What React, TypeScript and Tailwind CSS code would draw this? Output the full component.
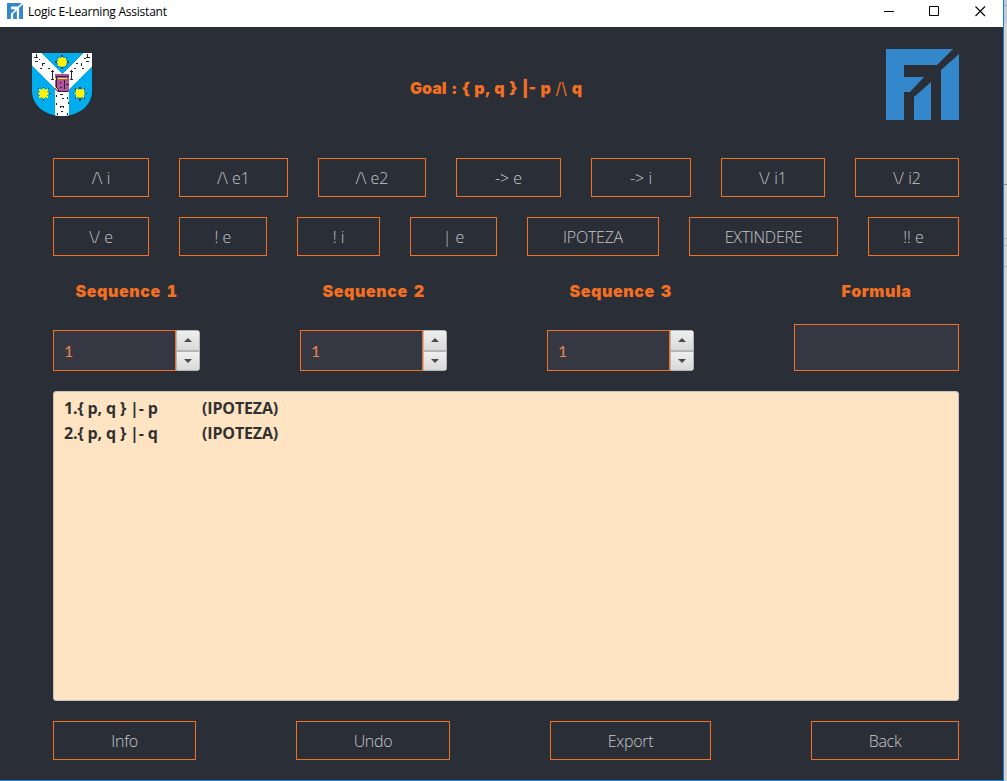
import React from "react";

const ui = "font-['Open_Sans','Noto_Sans',sans-serif]";

function Logo({ className }: { className: string }) {
  return (
    <svg viewBox="0 0 73 71" preserveAspectRatio="none" className={className} fill="#3387ca">
      <path d="M0 0H67L51 16H18V28H38L24 43H18V71H0Z" />
      <path d="M28 48L45 33V71H28Z" />
      <path d="M55 21L73 5V71H55Z" />
    </svg>
  );
}

function Star({ x, y }: { x: number; y: number }) {
  return (
    <g transform={`translate(${x} ${y})`}>
      <path d="M-7 0H7M0 -7V7M-5 -5L5 5M5 -5L-5 5" stroke="#3a3b22" strokeWidth="1.4" />
      <path
        d="M0 -5.5L1.6 -3.8L4.4 -4.4L3.8 -1.6L5.5 0L3.8 1.6L4.4 4.4L1.6 3.8L0 5.5L-1.6 3.8L-4.4 4.4L-3.8 1.6L-5.5 0L-3.8 -1.6L-4.4 -4.4L-1.6 -3.8Z"
        fill="#fff200"
      />
    </g>
  );
}

function Crest() {
  return (
    <svg viewBox="0 0 60 63" className="h-[63px] w-[60px]" shapeRendering="crispEdges">
      <clipPath id="shield">
        <path d="M0 0H60V38C60 53 46 63 30 63S0 53 0 38Z" />
      </clipPath>
      <g clipPath="url(#shield)">
        <path d="M0 0H60V63H0Z" fill="#00adef" />
        <path d="M0 0H9L30 21L51 0H60V13L37 36V63H23V36L0 13Z" fill="#fff" />
        <g fill="none" stroke="#25282e" strokeWidth="1">
          <path d="M4.5 1V4M2 4.5H6M3 8.5H6M10.5 10V13M16 15.5H18M8 15.5H10M20.5 17V26M19 18.5H22M19 26.5H22" />
          <path d="M55.5 1V4M54 4.5H58M54 8.5H57M49.5 10V13M42 15.5H44M50 15.5H52M39.5 17V26M38 18.5H41M38 26.5H41" />
          <path d="M11 10.5H13M46 10.5H44M52 5.5H54M7 6.5H8" />
          <path d="M28 41.5H31M30 45.5H32M24.5 42V44M35.5 44V46M28 53.5H32M28.5 53V55M31.5 53V55M29 58.5H31M24.5 50V52M36.5 49V51M25.5 60V62M35.5 60V62" />
        </g>
        <path d="M23 21H37V39H25L23 36Z" fill="#b5529d" />
        <path d="M24 23.5H37M24.5 24V34L27 38.5H36" fill="none" stroke="#25282e" strokeWidth="1.2" />
        <path d="M26 25.5H35M23.5 27V25M23 34L26 37" fill="none" stroke="#fff200" strokeWidth="1.2" />
        <path d="M32.5 27V36M28.5 29V31M28 34.5H30M34 31.5H37" fill="none" stroke="#25282e" />
      </g>
      <Star x={30} y={9} />
      <Star x={11.5} y={40.5} />
      <Star x={48} y={40.5} />
    </svg>
  );
}

type Item = { label: string; size: string };

const rowOne: Item[] = [
  { label: "/\\ i", size: "w-24" },
  { label: "/\\ e1", size: "w-[109px]" },
  { label: "/\\ e2", size: "w-[108px]" },
  { label: "-> e", size: "w-[105px]" },
  { label: "-> i", size: "w-[100px]" },
  { label: "\\/ i1", size: "w-[104px]" },
  { label: "\\/ i2", size: "w-[104px]" },
];

const rowTwo: Item[] = [
  { label: "\\/ e", size: "w-24" },
  { label: "! e", size: "w-[88px]" },
  { label: "! i", size: "w-[83px]" },
  { label: "| e", size: "w-[87px]" },
  { label: "IPOTEZA", size: "w-[132px] tracking-[-0.25px]" },
  { label: "EXTINDERE", size: "w-[149px] tracking-[-0.25px]" },
  { label: "!! e", size: "w-[91px]" },
];

const footer: Item[] = [
  { label: "Info", size: "w-[143px] tracking-[-0.3px]" },
  { label: "Undo", size: "w-[154px] tracking-[-0.3px]" },
  { label: "Export", size: "w-[161px] tracking-[-0.3px]" },
  { label: "Back", size: "w-[148px] tracking-[-0.3px]" },
];

function Buttons({ items }: { items: Item[] }) {
  return (
    <div className="flex h-[39px] justify-between">
      {items.map((b) => (
        <button
          key={b.label}
          className={`flex items-center justify-center border border-[#f36f21] text-base font-light whitespace-pre text-[#c6c7c9] ${b.size}`}
        >
          {b.label}
        </button>
      ))}
    </div>
  );
}

const heading =
  "font-['Inter','Liberation_Sans',sans-serif] text-base leading-5 font-black whitespace-pre text-[#f36f21]";

function Heading({ children }: { children: React.ReactNode }) {
  return <span className={`${heading} tracking-[0.6px] tabular-nums [word-spacing:1px]`}>{children}</span>;
}

function Arrow({ down }: { down?: boolean }) {
  return (
    <div className="flex flex-1 items-center justify-center bg-linear-to-b from-[#efefef] to-[#d9d9d9]">
      <svg viewBox="0 0 8 4" className="h-1 w-2" fill="#4a4a4a">
        <path d={down ? "M0 0H8L4 4Z" : "M0 4H8L4 0Z"} />
      </svg>
    </div>
  );
}

function Sequence({ n }: { n: number }) {
  return (
    <div className="mr-[100px] flex w-[147px] flex-col items-center">
      <Heading>{`Sequence ${n}`}</Heading>
      <div className="mt-[29px] flex h-[41px] w-full">
        <div className="flex w-[123px] items-center border border-[#f36f21] bg-[#353842] pl-2.5 font-['Lato',sans-serif] text-base text-[#f0834a]">
          1
        </div>
        <div className="flex w-6 flex-col gap-0.5 rounded-r-[3px] border border-[#b5b5b5] bg-[#b5b5b5]">
          <Arrow />
          <Arrow down />
        </div>
      </div>
    </div>
  );
}

export default function App() {
  return (
    <div className={`flex h-[781px] w-[1007px] overflow-hidden ${ui}`}>
      <div className="flex w-[1004px] flex-col border-r border-b border-[#1a7fd4] bg-[#2a2e37]">
        <header className="flex h-[27px] shrink-0 items-start bg-white">
          <Logo className="mt-[3px] ml-[7px] h-4 w-4" />
          <span className="mt-1 ml-[5px] flex-1 text-xs leading-4 tracking-[-0.23px] text-black">
            Logic E-Learning Assistant
          </span>
          <svg viewBox="0 0 102 11" className="mt-1.5 mr-[17px] h-[11px] w-[102px]" fill="none" stroke="#000">
            <path d="M0 5.5H10M45.5 0.5H54.5V9.5H45.5Z" />
            <path d="M91.5 0.5L101 10M101 0.5L91.5 10" strokeWidth="1.1" />
          </svg>
        </header>

        <section className="flex h-[131px] shrink-0 items-start justify-between pr-[44px] pl-8">
          <div className="mt-[26px]">
            <Crest />
          </div>
          <div className={`${heading} mt-[51px] ml-3.5 [word-spacing:1.4px]`}>
            {"Goal : { p, q } |- p "}
            <span className="font-normal">{"/\\"}</span>
            {" q"}
          </div>
          <Logo className="mt-[22px] h-[71px] w-[73px]" />
        </section>

        <main className="flex flex-col pr-[44px] pl-[53px]">
          <Buttons items={rowOne} />
          <div className="mt-5">
            <Buttons items={rowTwo} />
          </div>
          <section className="mt-[25px] flex h-[90px]">
            <Sequence n={1} />
            <Sequence n={2} />
            <Sequence n={3} />
            <div className="flex w-[165px] flex-col items-center">
              <Heading>Formula</Heading>
              <div className="mt-[23px] h-[47px] w-full border border-[#f36f21] bg-[#353842]" />
            </div>
          </section>
          <section className="mt-5 h-[310px] rounded-[3px] border border-[#c4c2bd] bg-[#ffe4c4] px-2.5 pt-1 text-base leading-[25px] font-bold text-[#303030]">
            {["p", "q"].map((v, i) => (
              <div key={v} className="flex">
                <span className="w-[138px] tracking-[-0.15px]">{`${i + 1}.{ p, q } |- ${v}`}</span>
                <span className="tracking-[-0.15px]">(IPOTEZA)</span>
              </div>
            ))}
          </section>
          <div className="mt-5">
            <Buttons items={footer} />
          </div>
        </main>
      </div>
      <div className="flex w-[3px] flex-col bg-[#d4d4d4]">
        <div className="h-[5px] bg-[#b9c9df]" />
        <div className="h-[18px] border-t border-[#a5adb8] bg-[#c0cbda]" />
        <div className="h-[162px] border-b border-[#8f8f8f]" />
        <div className="h-[54px] border-b border-[#b5b5b5]" />
        <div className="h-[7px] border-b border-[#b5b5b5]" />
        <div className="h-[21px] border-b border-[#b5b5b5]" />
      </div>
    </div>
  );
}
